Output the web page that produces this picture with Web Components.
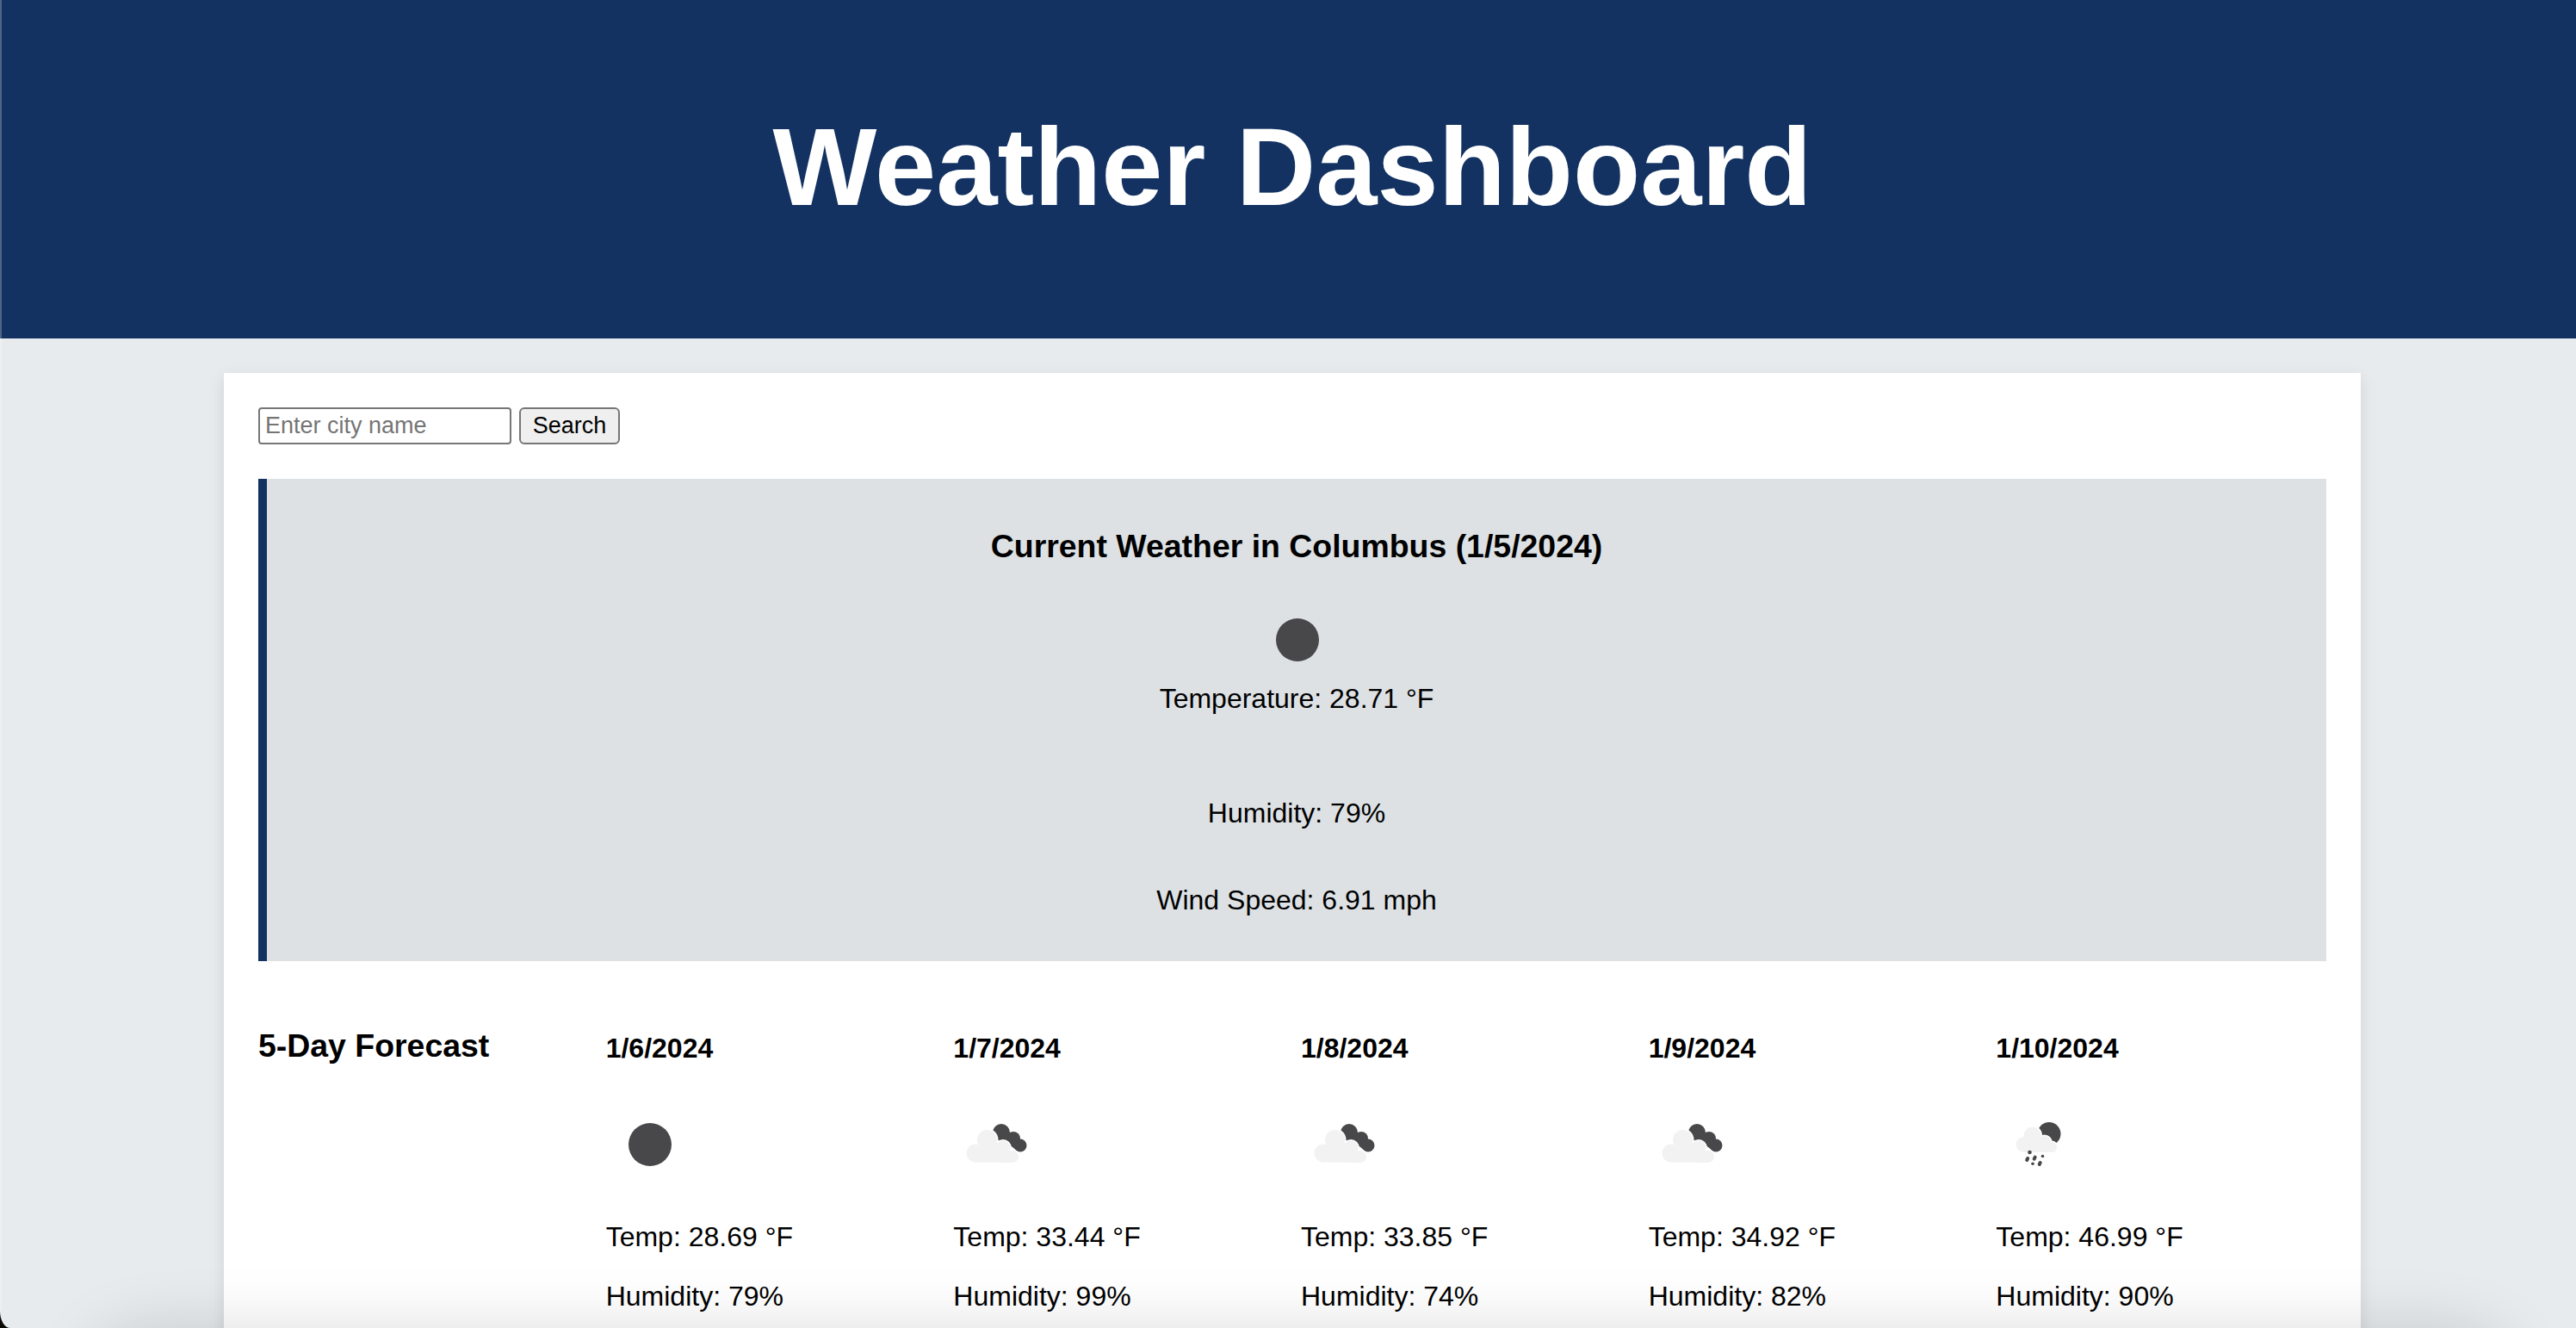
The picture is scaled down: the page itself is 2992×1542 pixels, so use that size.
<!DOCTYPE html>
<html lang="en">
<head>
<meta charset="utf-8">
<title>Weather Dashboard</title>
<style>
  html { height: 100%; overflow: hidden; background: #0b0a05; }
  body {
    margin: 0; height: 100%; overflow: hidden;
    background: #e7ebee; color: #000;
    border-bottom-left-radius: 12px 20px;
    font: 32px/37px "Liberation Sans", Arial, sans-serif;
  }
</style>
</head>
<body>
<weather-app></weather-app>
<script>
const define = (name, html, setup) => {
  const template = document.createElement('template');
  template.innerHTML = html;
  customElements.define(name, class extends HTMLElement {
    constructor() {
      super();
      this.attachShadow({ mode: 'open' }).append(template.content.cloneNode(true));
    }
    connectedCallback() { if (setup) setup(this, this.shadowRoot); }
  });
};

// A cloud is a set of round lobes on a flat base, with a white rim that cuts into what is behind it.
const cloud = lobes => `
  <g fill="#fff" stroke="#fff" stroke-width="3" stroke-linejoin="round">${lobes}</g>
  <g fill="#f2f2f2">${lobes}</g>`;

const icons = {
  moon: '<circle cx="51" cy="50" r="25" fill="#48484a"/>',
  clouds: `
    <g fill="#48484a"><circle cx="56" cy="36" r="10"/><circle cx="70" cy="43" r="8"/><circle cx="78" cy="51" r="7.5"/></g>
    <path d="M58 38L77 52" stroke="#48484a" stroke-width="11"/>
    ${cloud('<circle cx="26" cy="60" r="10.5"/><circle cx="39.5" cy="44.5" r="11.5"/><circle cx="58" cy="54" r="8.5"/><circle cx="69" cy="64" r="7"/><path d="M26 70.5V55l5-8h18l12 7 8 6v11z"/>')}`,
  rain: `
    <circle cx="62" cy="37.5" r="13.5" fill="#48484a"/>
    ${cloud('<circle cx="32.5" cy="50" r="9"/><circle cx="42.5" cy="39.5" r="10"/><circle cx="56.5" cy="48" r="8"/><circle cx="65" cy="53" r="6"/><path d="M32.5 59V47l4-6h14l14 8v10z"/>')}
    <g fill="#48484a"><circle cx="39.5" cy="59" r="2.3"/><circle cx="54.5" cy="63.5" r="1.8"/><circle cx="43" cy="72.3" r="1.8"/></g>
    <g stroke="#48484a" stroke-width="4" stroke-linecap="round"><path d="M37.2 66l-1 2M45.7 64.7l-1 2M51.7 71l-1 2"/></g>`
};

define('weather-icon', `
  <style>:host { display: block; width: 100px; height: 100px; } svg { display: block; width: 100%; height: 100%; }</style>
  <svg viewBox="0 0 100 100" aria-hidden="true"></svg>`,
  (el, root) => { root.querySelector('svg').innerHTML = icons[el.getAttribute('type')] || ''; });

define('page-header', `
  <style>
    :host { display: block; background: #133261; color: #fff; padding: 40px 40px 40px 50px; text-align: center; }
    h1 { margin: 80px 0 86px; font-size: 128px; line-height: 147px; }
  </style>
  <h1><slot></slot></h1>`);

define('city-search', `
  <style>
    :host { display: block; }
    form { display: flex; gap: 9px; }
    input, button { box-sizing: border-box; height: 43px; margin: 0; border: 2px solid #767676; font: 27px/31px "Liberation Sans", Arial, sans-serif; }
    input { width: 294px; padding: 2px 6px; border-radius: 4px; background: #fff; }
    input::placeholder { color: #757575; opacity: 1; }
    button { width: 117px; padding: 2px 0; border-radius: 6px; background: #efefef; color: #000; text-align: center; }
  </style>
  <form><input type="text" aria-label="City name" placeholder="Enter city name"><button type="button">Search</button></form>`);

define('current-weather', `
  <style>
    :host { display: flex; flex-direction: column; align-items: center; padding: 20px; border-left: 10px solid #133261; background: #dde1e4; }
    h3 { margin: 37px 0; line-height: 43px; }
    p { margin: 32px 0; }
    .temp { margin: 0 0 64px; }
  </style>
  <h3><slot></slot></h3>
  <weather-icon type="moon"></weather-icon>
  <p class="temp">Temperature: 28.71 °F</p>
  <p>Humidity: 79%</p>
  <p>Wind Speed: 6.91 mph</p>`);

define('forecast-day', `
  <style>
    :host { display: block; }
    h4 { margin: 43px 0; line-height: 37px; }
    weather-icon { margin-bottom: 39px; }
    p { margin: 0 0 32px; }
  </style>
  <h4></h4><div class="icon"></div><p class="temp"></p><p class="humidity"></p>`,
  (el, root) => {
    root.querySelector('h4').textContent = el.getAttribute('date');
    root.querySelector('.temp').textContent = `Temp: ${el.getAttribute('temp')} °F`;
    root.querySelector('.humidity').textContent = `Humidity: ${el.getAttribute('humidity')}%`;
    root.querySelector('.icon').innerHTML = `<weather-icon type="${el.getAttribute('icon')}"></weather-icon>`;
  });

define('five-day-forecast', `
  <style>
    :host { display: grid; grid-template-columns: repeat(6, 1fr); gap: 20px; }
    h3 { margin: 37px 0; line-height: 43px; }
  </style>
  <h3>5-Day Forecast</h3>
  <forecast-day date="1/6/2024" icon="moon" temp="28.69" humidity="79"></forecast-day>
  <forecast-day date="1/7/2024" icon="clouds" temp="33.44" humidity="99"></forecast-day>
  <forecast-day date="1/8/2024" icon="clouds" temp="33.85" humidity="74"></forecast-day>
  <forecast-day date="1/9/2024" icon="clouds" temp="34.92" humidity="82"></forecast-day>
  <forecast-day date="1/10/2024" icon="rain" temp="46.99" humidity="90"></forecast-day>`);

define('weather-app', `
  <style>
    :host { display: block; height: 100%; }
    main { margin: 40px 250px 0 260px; padding: 40px; background: #fff; box-shadow: 0 6px 18px rgba(0, 0, 0, .1); display: flex; flex-direction: column; gap: 40px; }
    .edge { position: fixed; left: 0; top: 0; bottom: 20px; width: 2px; background: rgba(255, 255, 255, .25); }
    .shade { position: fixed; left: 110px; right: 80px; bottom: -210px; height: 200px; box-shadow: 0 0 80px rgba(0, 0, 0, .18); border-radius: 60px; }
  </style>
  <page-header>Weather Dashboard</page-header>
  <main>
    <city-search></city-search>
    <current-weather>Current Weather in Columbus (1/5/2024)</current-weather>
    <five-day-forecast></five-day-forecast>
  </main>
  <div class="edge"></div>
  <div class="shade"></div>`);
</script>
</body>
</html>
